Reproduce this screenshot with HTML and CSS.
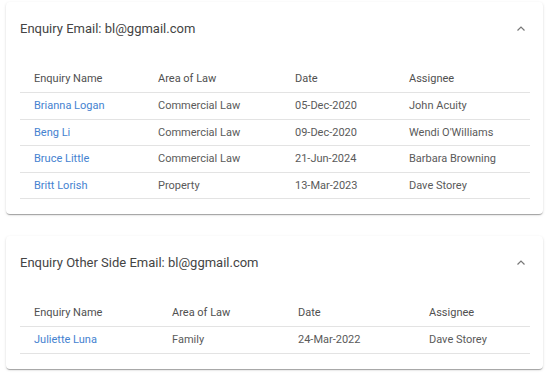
FILE: index.html
```html
<!DOCTYPE html>
<html lang="en">
<head>
    <meta charset="UTF-8">
    <meta name="viewport" content="width=device-width, initial-scale=1.0">
    <title>Enquiries</title>
    <link rel="stylesheet" href="styles.css">
</head>

<body>
    <div class="panel">
        <div class="panel-header">
            <span class="panel-title">Enquiry Email: bl@ggmail.com</span>
            <svg class="chevron" width="12" height="12" viewBox="0 0 12 12"><path d="M2.5 7.5 L6 4 L9.5 7.5" fill="none" stroke="#777" stroke-width="1.2"/></svg>
        </div>
        <table class="enquiries">
            <colgroup>
                <col class="col-124"><col class="col-137"><col class="col-114"><col>
            </colgroup>
            <thead>
                <tr><th>Enquiry Name</th><th>Area of Law</th><th>Date</th><th>Assignee</th></tr>
            </thead>
            <tbody>
                <tr><td><a href="#">Brianna Logan</a></td><td>Commercial Law</td><td>05-Dec-2020</td><td>John Acuity</td></tr>
                <tr><td><a href="#">Beng Li</a></td><td>Commercial Law</td><td>09-Dec-2020</td><td>Wendi O'Williams</td></tr>
                <tr><td><a href="#">Bruce Little</a></td><td>Commercial Law</td><td>21-Jun-2024</td><td>Barbara Browning</td></tr>
                <tr><td><a href="#">Britt Lorish</a></td><td>Property</td><td>13-Mar-2023</td><td>Dave Storey</td></tr>
            </tbody>
        </table>
    </div>

    <div class="panel">
        <div class="panel-header">
            <span class="panel-title">Enquiry Other Side Email: bl@ggmail.com</span>
            <svg class="chevron" width="12" height="12" viewBox="0 0 12 12"><path d="M2.5 7.5 L6 4 L9.5 7.5" fill="none" stroke="#777" stroke-width="1.2"/></svg>
        </div>
        <table class="enquiries">
            <colgroup>
                <col class="col-138"><col class="col-126"><col class="col-131"><col>
            </colgroup>
            <thead>
                <tr><th>Enquiry Name</th><th>Area of Law</th><th>Date</th><th>Assignee</th></tr>
            </thead>
            <tbody>
                <tr><td><a href="#">Juliette Luna</a></td><td>Family</td><td>24-Mar-2022</td><td>Dave Storey</td></tr>
            </tbody>
        </table>
    </div>
</body>
</html>
```

FILE: styles.css
```css
body {
    font-family: Roboto, "Noto Sans", Arial, sans-serif;
    margin: 0;
    padding: 2px 7px 0 6px;
    background-color: #fff;
    color: #444;
}

.panel {
    background-color: #fff;
    border-radius: 4px;
    box-shadow: 0 2px 1px -1px rgba(0,0,0,0.2), 0 1px 1px 0 rgba(0,0,0,0.14), 0 1px 3px 0 rgba(0,0,0,0.12);
    padding: 0 13px 15px 14px;
    margin-bottom: 22px;
}

.panel-header {
    height: 53px;
    display: flex;
    align-items: center;
    justify-content: space-between;
    margin-bottom: 10px;
}

.panel-title {
    font-size: 13px;
    color: #444;
}

.chevron {
    margin-right: 3px;
}

.enquiries {
    width: 100%;
    table-layout: fixed;
    border-collapse: collapse;
    font-size: 11px;
}

.col-124 { width: 124px; }
.col-126 { width: 126px; }
.col-131 { width: 131px; }
.col-137 { width: 137px; }
.col-138 { width: 138px; }
.col-114 { width: 114px; }

.enquiries th {
    font-weight: normal;
    text-align: left;
    color: #505050;
    height: 27px;
    padding: 0 14px;
    border-bottom: 1px solid #e3e3e3;
}

.enquiries td {
    height: 25.5px;
    padding: 0 14px;
    border-bottom: 1px solid #e3e3e3;
    color: #5a5a5a;
    white-space: nowrap;
}

.enquiries a {
    color: #4582d0;
    text-decoration: none;
}
```
